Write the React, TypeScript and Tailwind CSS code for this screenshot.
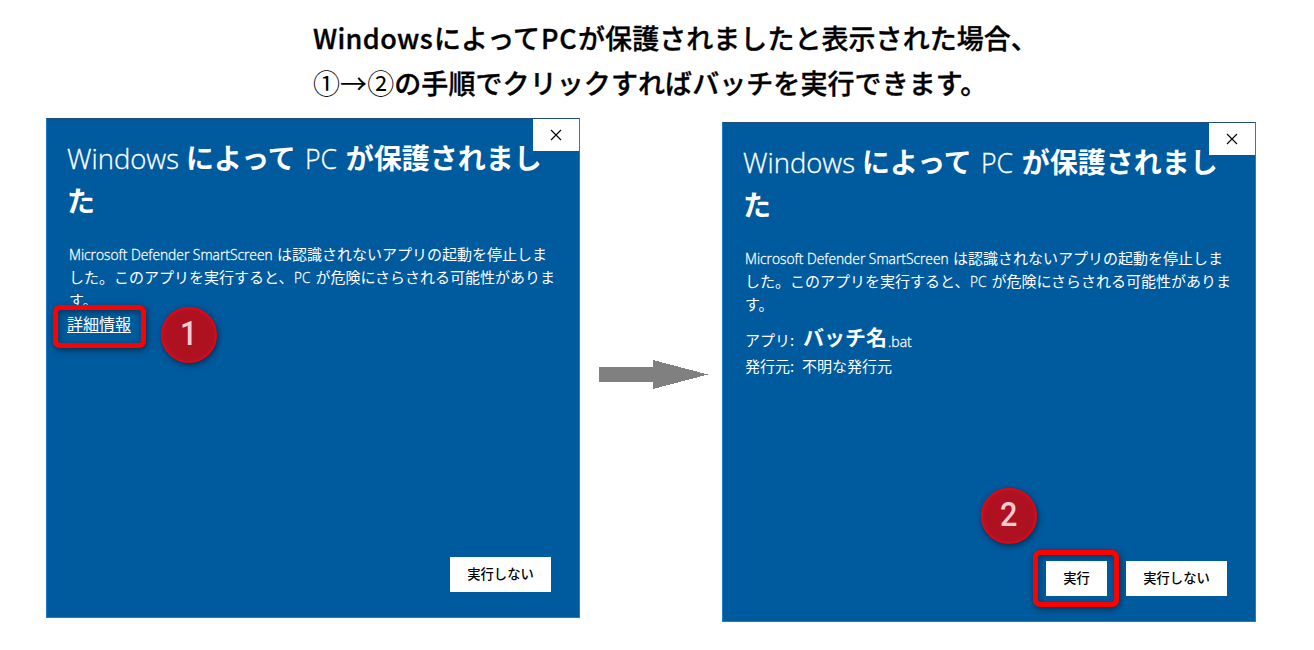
import React from "react";

const jp = "font-['Noto_Sans_CJK_JP',sans-serif]";
const latin = "inline-block whitespace-pre align-baseline leading-none font-['Open_Sans','Noto_Sans_CJK_JP',sans-serif] font-light [-webkit-text-stroke:0.3px_white]";

function CloseButton() {
  return (
    <button className="absolute top-0 right-0 flex h-8 w-[46px] items-center justify-center bg-white" aria-label="閉じる">
      <svg width="12" height="12" viewBox="0 0 12 12" fill="none" stroke="#000" strokeWidth="1.1">
        <path d="M1 1L11 11M11 1L1 11" />
      </svg>
    </button>
  );
}

function DialogButton({ children, width }: { children: React.ReactNode; width: string }) {
  return (
    <button className={`${width} flex h-[35px] items-center justify-center bg-white pb-0.5 text-[13.33px] leading-none font-medium text-black`}>
      {children}
    </button>
  );
}

function Badge({ children, place }: { children: React.ReactNode; place: string }) {
  return (
    <div className={`${place} absolute flex size-14 items-center justify-center rounded-full border-2 border-[#e30613] bg-[#ae1221] shadow-[1px_2px_6px_rgba(0,0,0,0.5),inset_0_0_5px_rgba(190,20,40,0.9)]`}>
      <span className="-mt-1 block scale-x-90 font-['Roboto',sans-serif] text-[34px] leading-none font-medium text-[#f0ccd2]">{children}</span>
    </div>
  );
}

function Highlight({ place }: { place: string }) {
  return (
    <div className={`${place} pointer-events-none absolute rounded-[7px] border-[5px] border-[#fe0000] shadow-[1px_2px_6px_rgba(0,0,0,0.5),inset_1px_2px_6px_rgba(0,0,0,0.4)]`} />
  );
}

function Dialog({ children, actions, place }: { children: React.ReactNode; actions: React.ReactNode; place: string }) {
  return (
    <section className={`${place} relative flex h-[500px] w-[534px] shrink-0 flex-col border border-[#1a7fd0] border-t-[#244c78] bg-[#005a9e] text-white`}>
      <h2 className="pt-[17px] pl-5 text-[28px] leading-[43px] font-bold whitespace-nowrap">
        <span className={`${latin} w-[119px]`}><span className="inline-block origin-left scale-x-[0.98]">Windows</span></span>
        によって
        <span className={`${latin} w-[50px] pl-[9px]`}><span className="inline-block origin-left scale-x-[0.95]">PC</span></span>
        が保護されまし
        <br />た
      </h2>
      <p className="pt-5 pl-[22px] text-[15px] leading-[23px] whitespace-nowrap">
        <span className={`${latin} w-[208px]`}><span className="inline-block origin-left scale-x-[0.92]">Microsoft Defender SmartScreen</span></span>
        は認識されないアプリの起動を停止しま
        <br />
        した。このアプリを実行すると、
        <span className={`${latin} w-[22px] pl-px`}><span className="inline-block origin-left scale-x-[0.9]">PC</span></span>
        が危険にさらされる可能性がありま
        <br />
        す。
      </p>
      {children}
      <div className="mt-auto flex justify-end gap-[19px] pr-7 pb-[25px]">{actions}</div>
      <CloseButton />
    </section>
  );
}

export default function App() {
  return (
    <main className={`${jp} h-[650px] w-[1314px] overflow-hidden bg-white`}>
      <header className="h-[118px] pt-[15px] pl-[313px] text-[27px] leading-[45px] font-medium whitespace-nowrap text-black [-webkit-text-stroke:0.35px_black]">
        <p className="flex tracking-[0.05px]">
          <span className="w-[121px] tracking-[0.35px]">Windows</span>
          <span>によって</span>
          <span className="w-[38px] pl-px tracking-[0.8px]">PC</span>
          <span>が保護されましたと表示された場合、</span>
        </p>
        <p className="tracking-[0.08px]"><span className="font-normal [-webkit-text-stroke:0]">①→②</span>の手順でクリックすればバッチを実行できます。</p>
      </header>
      <div className="flex items-start pl-[46px]">
        <Dialog place="mt-0" actions={<DialogButton width="w-[101px]">実行しない</DialogButton>}>
          <a className="ml-5 w-16 text-base leading-6 underline underline-offset-2">詳細情報</a>
          <Highlight place="left-[6px] top-[186px] h-[43px] w-[93px]" />
          <Badge place="left-[114px] top-[188px]">1</Badge>
        </Dialog>
        <svg className="mt-[242px] ml-[19px] shrink-0" width="109" height="29" viewBox="0 0 109 29" shapeRendering="crispEdges">
          <path d="M0 7H54V0L109 14.5L54 29V22H0Z" fill="#808080" />
        </svg>
        <Dialog
          place="mt-1 ml-[14px]"
          actions={
            <>
              <DialogButton width="w-[61px]">実行</DialogButton>
              <DialogButton width="w-[101px]">実行しない</DialogButton>
            </>
          }
        >
          <div className="mt-2 pl-[22px] text-[15px] leading-[26px] whitespace-nowrap">
            <p className="flex h-[29px] items-baseline">
              <span className="relative top-px w-[58px]">アプリ:</span>
              <span className="text-[21px] font-bold">バッチ名</span>
              <span className={`${latin} relative top-0.5 pl-px text-sm`}>.bat</span>
            </p>
            <p className="flex pt-px">
              <span className="w-[57px]">発行元:</span>
              <span>不明な発行元</span>
            </p>
          </div>
          <Badge place="left-[258px] top-[365px]">2</Badge>
          <Highlight place="left-[310px] top-[427px] h-[57px] w-[86px]" />
        </Dialog>
      </div>
    </main>
  );
}
